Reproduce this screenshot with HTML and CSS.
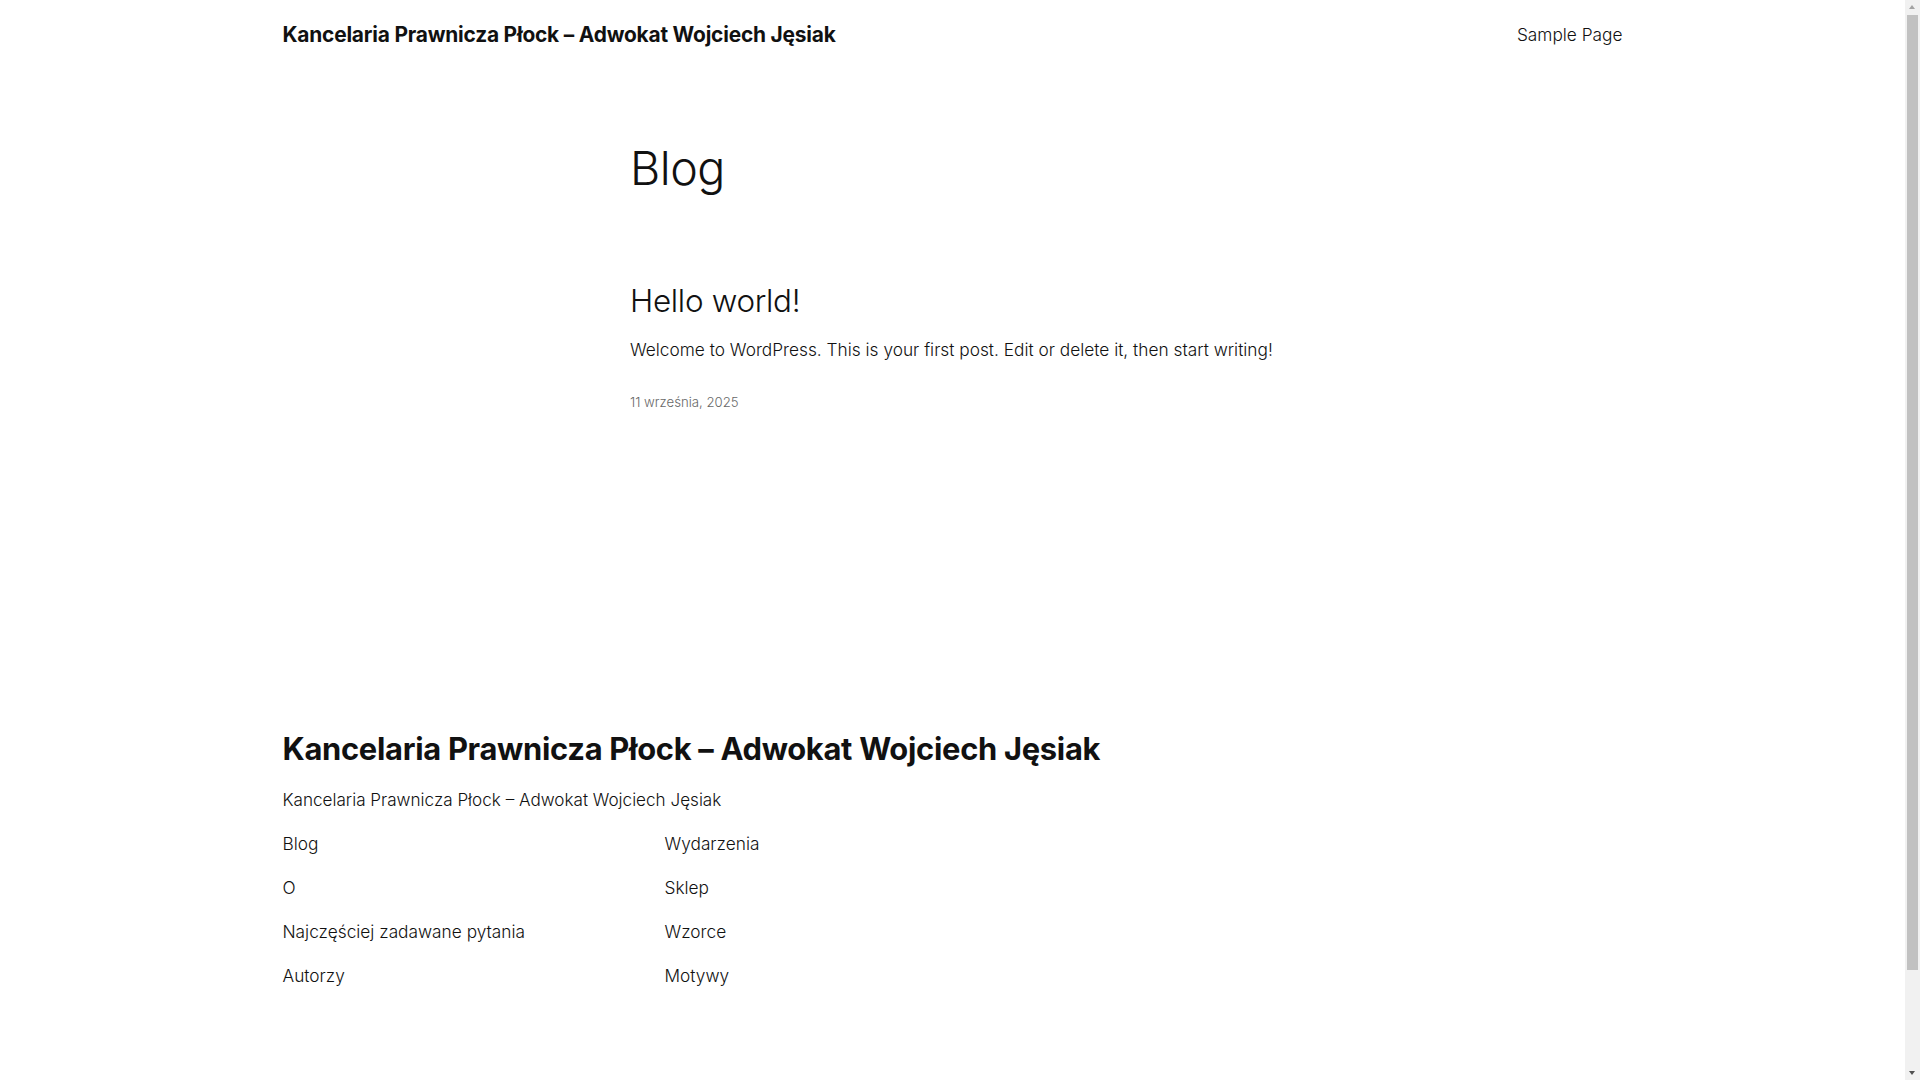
FILE: index.html
```html
<!DOCTYPE html>
<html lang="pl">
<head>
  <meta charset="UTF-8">
  <meta name="viewport" content="width=device-width, initial-scale=1.0">
  <title>Blog – Kancelaria Prawnicza Płock – Adwokat Wojciech Jęsiak</title>
  <link rel="stylesheet" href="styles.css">
</head>
<body>
  <header class="site-header">
    <a class="site-title" href="#">Kancelaria Prawnicza Płock – Adwokat Wojciech Jęsiak</a>
    <nav class="header-nav">
      <a href="#">Sample Page</a>
    </nav>
  </header>

  <main class="site-main">
    <h1 class="page-title">Blog</h1>

    <article class="post">
      <h2 class="post-title"><a href="#">Hello world!</a></h2>
      <p class="post-excerpt">Welcome to WordPress. This is your first post. Edit or delete it, then start writing!</p>
      <time class="post-date" datetime="2025-09-11">11 września, 2025</time>
    </article>
  </main>

  <footer class="site-footer">
    <div class="footer-inner">
      <h2 class="footer-title"><a href="#">Kancelaria Prawnicza Płock – Adwokat Wojciech Jęsiak</a></h2>
      <p class="footer-tagline">Kancelaria Prawnicza Płock – Adwokat Wojciech Jęsiak</p>
      <nav class="footer-nav">
        <ul>
          <li><a href="#">Blog</a></li>
          <li><a href="#">O</a></li>
          <li><a href="#">Najczęściej zadawane pytania</a></li>
          <li><a href="#">Autorzy</a></li>
        </ul>
        <ul>
          <li><a href="#">Wydarzenia</a></li>
          <li><a href="#">Sklep</a></li>
          <li><a href="#">Wzorce</a></li>
          <li><a href="#">Motywy</a></li>
        </ul>
      </nav>
    </div>
  </footer>

  <!-- browser scrollbar, as seen in the screenshot -->
  <div class="scrollbar">
    <span class="scroll-arrow up"></span>
    <span class="scroll-thumb"></span>
    <span class="scroll-arrow down"></span>
  </div>
</body>
</html>
```

FILE: styles.css
```css
body {
  margin: 0;
  padding-right: 15px;
  font-family: Inter, "Noto Sans", sans-serif;
  font-weight: 300;
  font-size: 17.3px;
  line-height: 27px;
  color: #111111;
  background: #fff;
}
a {
  color: inherit;
  text-decoration: none;
}
h1, h2, p, ul {
  margin: 0;
  padding: 0;
}
.site-header {
  max-width: 1340px;
  height: 68px;
  margin: 0 auto;
  display: flex;
  align-items: center;
  justify-content: space-between;
}
.site-title {
  font-size: 20.9px;
  font-weight: 700;
  letter-spacing: -0.2px;
}
.site-main {
  width: 645px;
  margin: 0 auto;
  padding-top: 70px;
}
.page-title {
  font-size: 46.6px;
  font-weight: 300;
  line-height: 60px;
  letter-spacing: -0.5px;
}
.post {
  display: flex;
  flex-direction: column;
  align-items: flex-start;
  padding-top: 84px;
}
.post-title {
  font-size: 31.4px;
  font-weight: 300;
  line-height: 38px;
  letter-spacing: -0.3px;
}
.post-excerpt {
  margin-top: 16px;
  white-space: nowrap;
}
.post-date {
  margin-top: 28px;
  font-size: 13.2px;
  line-height: 22px;
  color: #686868;
}
.site-footer {
  padding-top: 318px;
  padding-bottom: 196px;
}
.footer-inner {
  max-width: 1340px;
  margin: 0 auto;
}
.footer-title {
  font-size: 30.9px;
  font-weight: 700;
  line-height: 36px;
  letter-spacing: -0.3px;
}
.footer-tagline {
  margin-top: 19px;
  font-size: 17.1px;
}
.footer-nav {
  display: flex;
  margin-top: 17px;
}
.footer-nav ul {
  list-style: none;
  width: 382px;
  display: flex;
  flex-direction: column;
  gap: 17px;
}
.scrollbar {
  position: fixed;
  top: 0;
  right: 0;
  width: 15px;
  height: 100vh;
  background: #f1f1f1;
  display: flex;
  flex-direction: column;
  align-items: center;
}
.scroll-arrow {
  width: 15px;
  height: 15px;
  flex: none;
  position: relative;
}
.scroll-arrow::after {
  content: "";
  position: absolute;
  left: 4px;
  border-left: 3.5px solid transparent;
  border-right: 3.5px solid transparent;
}
.scroll-arrow.up::after {
  top: 5px;
  border-bottom: 4px solid #a3a3a3;
}
.scroll-arrow.down {
  margin-top: auto;
}
.scroll-arrow.down::after {
  top: 6px;
  border-top: 4px solid #505050;
}
.scroll-thumb {
  width: 11px;
  height: 955px;
  flex: none;
  background: #c1c1c1;
}
```
